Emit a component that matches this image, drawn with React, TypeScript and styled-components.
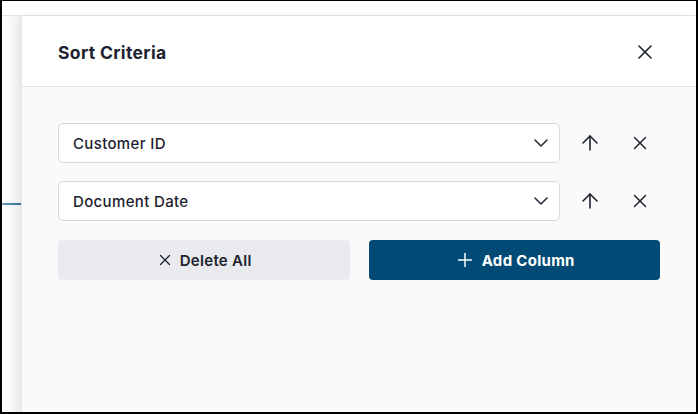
import React from 'react'
import styled, { createGlobalStyle } from 'styled-components'
import { X, ArrowUp, ChevronDown, Plus } from 'lucide-react'

const GlobalStyle = createGlobalStyle`
	html, body {
		margin: 0;
		padding: 0;
		background: #ffffff;
	}
	body {
		font-family: Inter, 'Noto Sans', 'Liberation Sans', sans-serif;
		color: #1e2230;
	}
	* {
		box-sizing: border-box;
	}
`

const criteria = ['Customer ID', 'Document Date']

export default function App() {
	return (
		<>
			<GlobalStyle />
			<Frame>
				<TopBar />
				<Main>
					<Backdrop>
						<BackdropRule />
					</Backdrop>
					<Drawer>
						<Header>
							<Title>Sort Criteria</Title>
							<IconButton aria-label="Close">
								<X size={24} strokeWidth={1.6} />
							</IconButton>
						</Header>
						<Body>
							{criteria.map((label) => (
								<Row key={label}>
									<Select>
										<span>{label}</span>
										<ChevronDown size={24} strokeWidth={1.6} />
									</Select>
									<IconButton aria-label="Move up">
										<ArrowUp size={24} strokeWidth={1.6} />
									</IconButton>
									<IconButton aria-label="Remove">
										<X size={22} strokeWidth={1.6} />
									</IconButton>
								</Row>
							))}
							<Actions>
								<ActionButton variant="secondary">
									<X size={18} strokeWidth={1.7} />
									Delete All
								</ActionButton>
								<ActionButton variant="primary">
									<Plus size={22} strokeWidth={1.6} />
									Add Column
								</ActionButton>
							</Actions>
						</Body>
					</Drawer>
				</Main>
			</Frame>
		</>
	)
}

const Frame = styled.div`
	width: 698px;
	height: 414px;
	border-style: solid;
	border-color: #000000;
	border-width: 1px 2px 2px 2px;
	display: flex;
	flex-direction: column;
	overflow: hidden;
	background: #ffffff;
`

const TopBar = styled.div`
	height: 15px;
	flex-shrink: 0;
	border-bottom: 1px solid #e3e3e6;
`

const Main = styled.div`
	flex: 1;
	display: flex;
	min-height: 0;
`

const Backdrop = styled.div`
	width: 19px;
	flex-shrink: 0;
	padding-top: 187px;
	background: linear-gradient(to right, #ffffff, #f1f1f1);
`

const BackdropRule = styled.div`
	height: 2px;
	background: linear-gradient(to right, #6f9cb8, #2f6a90);
`

const Drawer = styled.section`
	flex: 1;
	display: flex;
	flex-direction: column;
	border-left: 1px solid #e4e4e7;
	box-shadow: -4px 0 8px rgba(0, 0, 0, 0.04);
	background: #fafafa;
`

const Header = styled.header`
	height: 71px;
	flex-shrink: 0;
	display: flex;
	align-items: center;
	justify-content: space-between;
	padding: 2px 31px 0 36px;
	background: #ffffff;
	border-bottom: 1px solid #e1e1e8;
`

const Title = styled.h2`
	margin: 0;
	font-size: 17.5px;
	font-weight: 700;
	letter-spacing: 0.35px;
	color: #1e2230;
`

const Body = styled.div`
	padding: 36px 36px;
	display: flex;
	flex-direction: column;
	gap: 18px;
`

const Row = styled.div`
	display: grid;
	grid-template-columns: 1fr 40px 40px;
	column-gap: 10px;
	align-items: center;
`

const Select = styled.div`
	height: 40px;
	display: flex;
	align-items: center;
	justify-content: space-between;
	padding: 0 6px 0 14px;
	background: #ffffff;
	border: 1px solid #d6d9df;
	border-radius: 5px;
	font-size: 15px;
	font-weight: 500;
	letter-spacing: 0.35px;
	color: #1e2230;

	svg {
		color: #2a2e3a;
	}
`

const IconButton = styled.button`
	width: 40px;
	height: 40px;
	display: flex;
	align-items: center;
	justify-content: center;
	padding: 0;
	border: none;
	background: transparent;
	color: #1e2230;
	cursor: pointer;
`

const Actions = styled.div`
	display: grid;
	grid-template-columns: 1fr 1fr;
	column-gap: 19px;
	margin-top: 1px;
`

const ActionButton = styled.button<{ variant: 'primary' | 'secondary' }>`
	height: 40px;
	display: flex;
	align-items: center;
	justify-content: center;
	gap: 6px;
	border: none;
	border-radius: 4px;
	font-family: inherit;
	font-size: 15px;
	letter-spacing: 0.3px;
	font-weight: ${(p) => (p.variant === 'primary' ? 700 : 600)};
	background: ${(p) => (p.variant === 'primary' ? '#004a75' : '#e8eaed')};
	color: ${(p) => (p.variant === 'primary' ? '#ffffff' : '#1e2230')};
	cursor: pointer;
`
